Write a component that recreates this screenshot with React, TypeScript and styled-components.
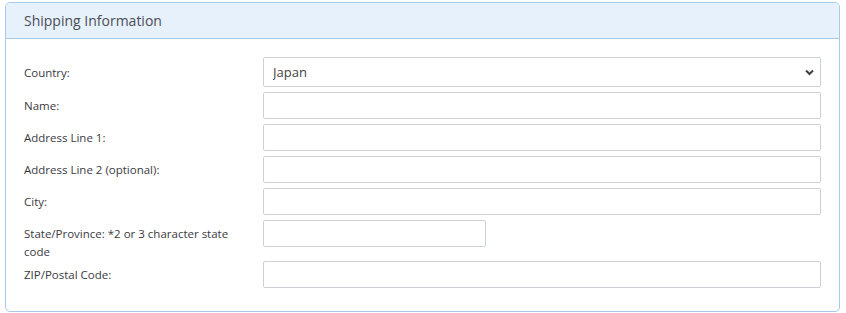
import React from "react";
import styled, { createGlobalStyle } from "styled-components";

const GlobalStyle = createGlobalStyle`
  html, body { margin: 0; padding: 0; background: #ffffff; }
  body { font-family: "Open Sans", "Liberation Sans", Arial, sans-serif; }
  * { box-sizing: border-box; }
`;

const Page = styled.div`
  padding: 2px 6px 0 5px;
`;

const Card = styled.section`
  border: 1px solid #a9c9e6;
  border-radius: 5px;
  background: #ffffff;
  overflow: hidden;
`;

const Header = styled.header`
  height: 36px;
  display: flex;
  align-items: center;
  padding: 0 18px;
  background: #e7f1fb;
  border-bottom: 1px solid #a9c9e6;
`;

const Title = styled.h2`
  margin: 0;
  font-size: 14px;
  font-weight: 400;
  color: #4a4d57;
`;

const Body = styled.div`
  padding: 18px;
  display: flex;
  flex-direction: column;
`;

const Row = styled.div`
  display: grid;
  grid-template-columns: 239px 1fr;
  align-items: start;
`;

const Label = styled.label<{ $top?: number }>`
  font-size: 11.5px;
  line-height: 18px;
  color: #3a3a42;
  padding: ${(p) => p.$top ?? 5}px 14px 0 0;
`;

const Field = styled.div<{ $width?: string }>`
  position: relative;
  width: ${(p) => p.$width ?? "100%"};
  margin-bottom: 5px;
`;

const TextInput = styled.input`
  display: block;
  width: 100%;
  height: 27px;
  border: 1px solid #cdd0d4;
  border-radius: 2px;
  background: #ffffff;
  padding: 0 9px;
  font-family: inherit;
  font-size: 13px;
  color: #444;
  outline: none;
`;

const Select = styled.select`
  display: block;
  width: 100%;
  height: 30px;
  border: 1px solid #cdd0d4;
  border-radius: 2px;
  background: #ffffff;
  padding: 0 9px;
  font-family: inherit;
  font-size: 13px;
  color: #444;
  appearance: none;
  -webkit-appearance: none;
  outline: none;
`;

const Chevron = styled.svg`
  position: absolute;
  right: 7px;
  top: 12px;
  width: 9px;
  height: 7px;
  pointer-events: none;
`;

type FieldDef = { label: string; width?: string };

const fields: FieldDef[] = [
  { label: "Name:" },
  { label: "Address Line 1:" },
  { label: "Address Line 2 (optional):" },
  { label: "City:" },
  { label: "State/Province: *2 or 3 character state code", width: "40%" },
  { label: "ZIP/Postal Code:" },
];

export default function App() {
  return (
    <>
      <GlobalStyle />
      <Page>
        <Card>
          <Header>
            <Title>Shipping Information</Title>
          </Header>
          <Body>
            <Row>
              <Label $top={7}>Country:</Label>
              <Field>
                <Select defaultValue="JP">
                  <option value="JP">Japan</option>
                  <option value="US">United States</option>
                </Select>
                <Chevron viewBox="0 0 9 7">
                  <path d="M1 1.5 L4.5 5 L8 1.5" fill="none" stroke="#3d4047" strokeWidth="2" />
                </Chevron>
              </Field>
            </Row>
            {fields.map((f) => (
              <Row key={f.label}>
                <Label>{f.label}</Label>
                <Field $width={f.width}>
                  <TextInput type="text" />
                </Field>
              </Row>
            ))}
          </Body>
        </Card>
      </Page>
    </>
  );
}
